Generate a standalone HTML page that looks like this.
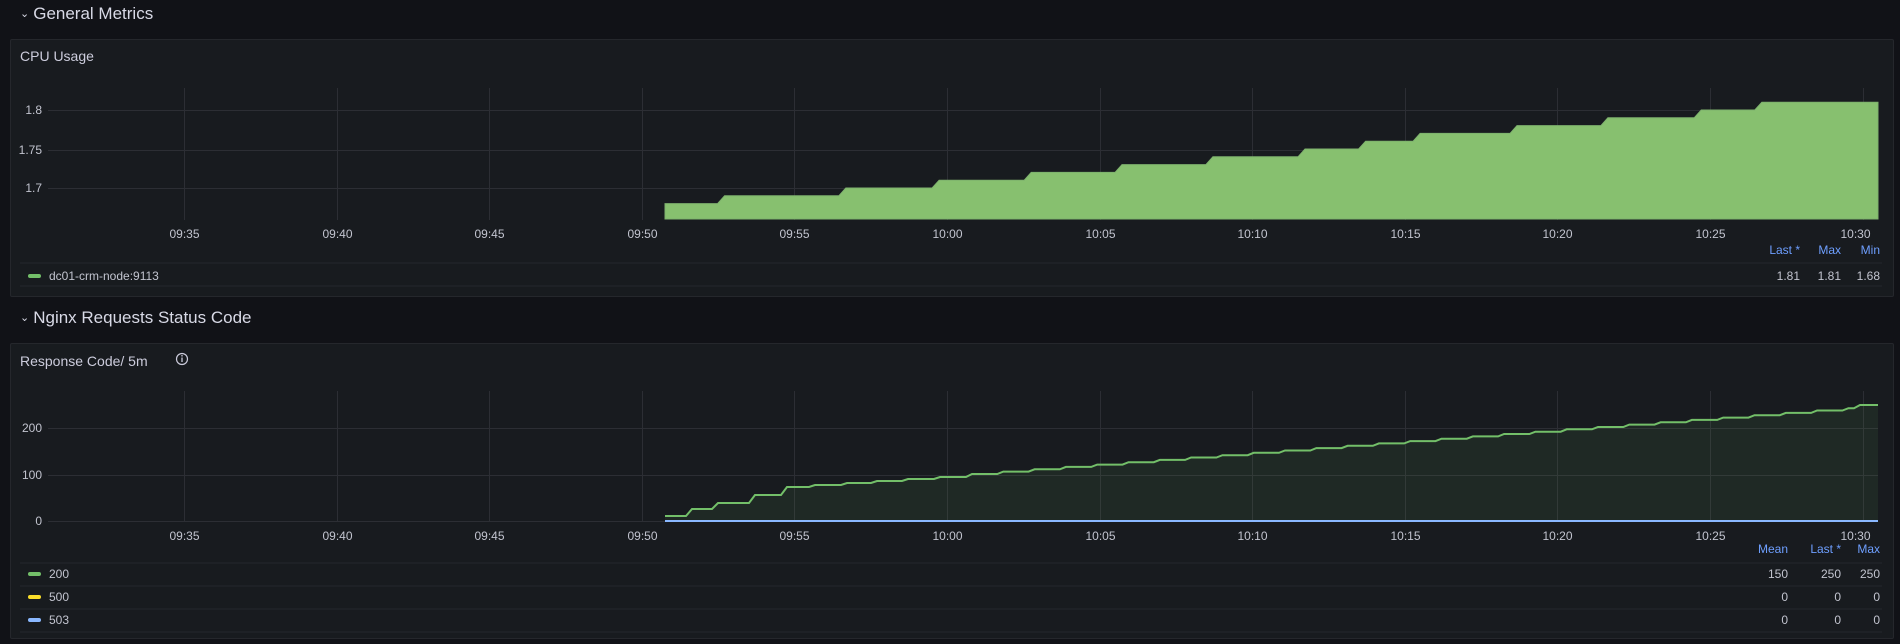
<!DOCTYPE html>
<html><head><meta charset="utf-8"><style>
html,body{margin:0;padding:0;background:#111217;width:1900px;height:644px;overflow:hidden;font-family:"Liberation Sans",sans-serif;color:#ccccdc}
.h{position:absolute;left:20px;font-size:17px;color:#d8d9e6}
.h span{font-size:11px;margin-right:4px;display:inline-block;transform:translateY(-2px)}
.p{position:absolute;left:10px;width:1884px;background:#181b1f;border:1px solid #25272c;border-radius:2px;box-sizing:border-box}
.t{position:absolute;left:9px;font-size:14px;color:#ccccdc}
svg{position:absolute;left:0;top:0}
svg text{font-family:"Liberation Sans",sans-serif;font-size:12px;fill:#c2c4cf}
</style></head><body>
<div class="h" style="top:4px"><span>&#8964;</span>General Metrics</div>
<div class="p" style="top:39px;height:258px"><div class="t" style="top:8px">CPU Usage</div></div>
<div class="h" style="top:308px"><span>&#8964;</span>Nginx Requests Status Code</div>
<div class="p" style="top:343px;height:296px"><div class="t" style="top:9px">Response Code/ 5m</div></div>
<svg width="1900" height="644" id="s">
<g stroke="#2c2e34" stroke-width="1" id="grid"></g>
<path id="cpu" fill="#87c06f" stroke="#7eb26d" stroke-width="1"/>
<path id="rfill" fill="rgba(115,191,105,0.09)"/>
<path id="rline" fill="none" stroke="#73bf69" stroke-width="2"/>
<line x1="665" y1="521" x2="1878" y2="521" stroke="#8ab8ff" stroke-width="2"/>
<g id="txt"></g>
<circle cx="182" cy="359" r="5.5" fill="none" stroke="#ccccdc" stroke-width="1.2"/>
<line x1="182" y1="357.5" x2="182" y2="362" stroke="#ccccdc" stroke-width="1.3"/>
<circle cx="182" cy="355.8" r="0.8" fill="#ccccdc"/>
<g font-size="12">
<text x="1800" y="254" text-anchor="end" style="fill:#6e9fff">Last *</text>
<text x="1841" y="254" text-anchor="end" style="fill:#6e9fff">Max</text>
<text x="1880" y="254" text-anchor="end" style="fill:#6e9fff">Min</text>
<line x1="20" y1="263" x2="1882" y2="263" stroke="#25272c"/>
<line x1="20" y1="286" x2="1882" y2="286" stroke="#25272c"/>
<rect x="28" y="274" width="13" height="4" rx="2" fill="#73bf69"/>
<text x="49" y="280">dc01-crm-node:9113</text>
<text x="1800" y="280" text-anchor="end">1.81</text>
<text x="1841" y="280" text-anchor="end">1.81</text>
<text x="1880" y="280" text-anchor="end">1.68</text>

<text x="1788" y="553" text-anchor="end" style="fill:#6e9fff">Mean</text>
<text x="1841" y="553" text-anchor="end" style="fill:#6e9fff">Last *</text>
<text x="1880" y="553" text-anchor="end" style="fill:#6e9fff">Max</text>
<line x1="20" y1="563" x2="1882" y2="563" stroke="#25272c"/>
<line x1="20" y1="586" x2="1882" y2="586" stroke="#25272c"/>
<line x1="20" y1="609" x2="1882" y2="609" stroke="#25272c"/>
<line x1="20" y1="632" x2="1882" y2="632" stroke="#25272c"/>
<rect x="28" y="572" width="13" height="4" rx="2" fill="#73bf69"/>
<rect x="28" y="595" width="13" height="4" rx="2" fill="#fade2a"/>
<rect x="28" y="618" width="13" height="4" rx="2" fill="#8ab8ff"/>
<text x="49" y="578">200</text><text x="49" y="601">500</text><text x="49" y="624">503</text>
<text x="1788" y="578" text-anchor="end">150</text><text x="1841" y="578" text-anchor="end">250</text><text x="1880" y="578" text-anchor="end">250</text>
<text x="1788" y="601" text-anchor="end">0</text><text x="1841" y="601" text-anchor="end">0</text><text x="1880" y="601" text-anchor="end">0</text>
<text x="1788" y="624" text-anchor="end">0</text><text x="1841" y="624" text-anchor="end">0</text><text x="1880" y="624" text-anchor="end">0</text>
</g>
</svg>
<script>
var NS="http://www.w3.org/2000/svg";
function el(p,n,a,t){var e=document.createElementNS(NS,n);for(var k in a)e.setAttribute(k,a[k]);if(t!=null)e.textContent=t;p.appendChild(e);return e;}
var g=document.getElementById('grid'),tx=document.getElementById('txt');
var labels=["09:35","09:40","09:45","09:50","09:55","10:00","10:05","10:10","10:15","10:20","10:25","10:30"];
for(var i=0;i<12;i++){var x=Math.round(184+i*152.6)+0.5;
 el(g,'line',{x1:x,y1:88,x2:x,y2:220});el(g,'line',{x1:x,y1:391,x2:x,y2:522});
 el(tx,'text',{x:x-(i==11?8:0),y:238,'text-anchor':'middle'},labels[i]);
 el(tx,'text',{x:x-(i==11?8:0),y:540,'text-anchor':'middle'},labels[i]);}
[[110,"1.8"],[150,"1.75"],[188,"1.7"]].forEach(function(a){el(g,'line',{x1:48,y1:a[0]+.5,x2:1878,y2:a[0]+.5});el(tx,'text',{x:42,y:a[0]+4,'text-anchor':'end'},a[1]);});
[[428,"200"],[475,"100"],[521,"0"]].forEach(function(a){el(g,'line',{x1:48,y1:a[0]+.5,x2:1878,y2:a[0]+.5});el(tx,'text',{x:42,y:a[0]+4,'text-anchor':'end'},a[1]);});
// CPU steps (visible coords *1.2117)
var st=[549,598,698,775,851,926,1001,1077,1127,1172,1252,1327,1404,1454];
var d="M665 219";
for(var i=0;i<14;i++){var x=st[i]*1.2117,y=188-(i-2)*7.8+0;y=203.6-i*7.8;
 if(i==0)d+=" L665 "+y;else d+=" L"+(x).toFixed(1)+" "+y.toFixed(1);
 var xe=(i<13?st[i+1]*1.2117-7:1878);d+=" L"+xe.toFixed(1)+" "+y.toFixed(1);}
d+=" L1878 219Z";document.getElementById('cpu').setAttribute('d',d);
// Response line
var pts=[[665,516],[692,509],[718,503],[755,495],[787,487],[815,485],[847,483],[877,481],[908,479],[940,477]];
var x=972,y=474;while(x<1860){pts.push([x,y]);x+=31.3;y-=2.35;}
pts.push([1860,405]);
var ld="M"+pts[0][0]+" "+pts[0][1];
for(var i=0;i<pts.length;i++){var nx=i<pts.length-1?pts[i+1][0]-6:1878;if(i>0)ld+=" L"+pts[i][0].toFixed(1)+" "+pts[i][1].toFixed(1);ld+=" L"+nx.toFixed(1)+" "+pts[i][1].toFixed(1);}
document.getElementById('rline').setAttribute('d',ld);
document.getElementById('rfill').setAttribute('d',ld+" L1878 521 L665 521Z");
</script>
</body></html>
